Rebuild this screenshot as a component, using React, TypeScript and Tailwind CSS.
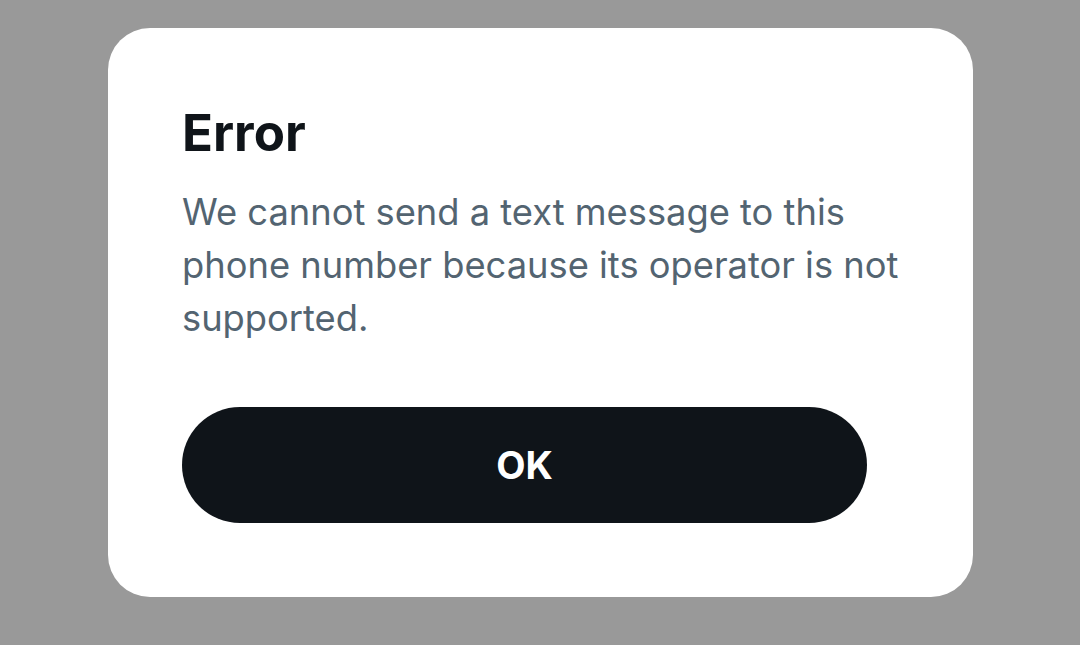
export default function App() {
  return (
    <div className="h-[645px] w-full bg-[#999999] pl-[108px] pt-[28px]">
      <div className="flex h-[569px] w-[865px] flex-col rounded-[42px] bg-white pl-[74px] pt-[75px] font-['Inter',sans-serif]">
        <h1 className="text-[51px] font-bold leading-[60px] text-[#0f1419]">Error</h1>
        <p className="mt-[23px] w-[740px] text-[36.3px] leading-[53px] text-[#536471]">
          We cannot send a text message to this phone number because its operator is not supported.
        </p>
        <button className="mt-[62px] h-[116px] w-[685px] rounded-full bg-[#0f1419] text-[38px] font-bold text-white">
          OK
        </button>
      </div>
    </div>
  )
}
